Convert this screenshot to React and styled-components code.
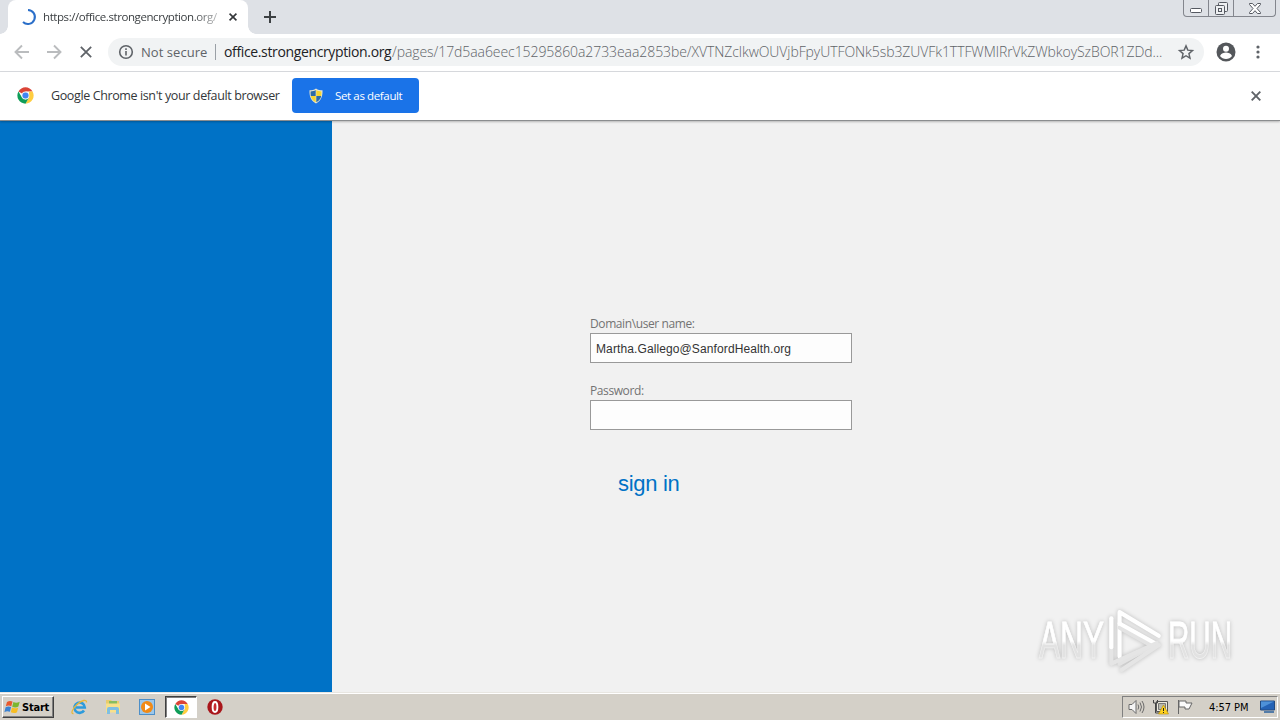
import React from "react";
import styled, { createGlobalStyle } from "styled-components";

const GlobalStyle = createGlobalStyle`
  * { box-sizing: border-box; }
  html, body { margin: 0; padding: 0; overflow: hidden; }
  button, input { font: inherit; border: 0; padding: 0; margin: 0; outline: 0; }
`;

const ui = `"Open Sans", "Noto Sans", sans-serif`;
const classic = `"DejaVu Sans Condensed", "DejaVu Sans", sans-serif`;

const Screen = styled.div`
  width: 1280px;
  height: 720px;
  display: flex;
  flex-direction: column;
  background: #f1f1f1;
  font-family: ${ui};
  overflow: hidden;
`;

const TabStrip = styled.header`
  height: 34px;
  flex: none;
  display: flex;
  background: #dee1e6;
  padding-left: 8px;
`;

const Tab = styled.div`
  position: relative;
  width: 240px;
  height: 34px;
  background: #fff;
  border-radius: 8px 8px 0 0;
  display: flex;
  align-items: center;
  padding: 0 8px 0 12px;
  &::before, &::after {
    content: "";
    position: absolute;
    bottom: 0;
    width: 8px;
    height: 8px;
  }
  &::before { left: -8px; background: radial-gradient(circle at 0 0, transparent 7.5px, #fff 8px); }
  &::after { right: -8px; background: radial-gradient(circle at 100% 0, transparent 7.5px, #fff 8px); }
`;

const TabTitle = styled.div`
  width: 177px;
  margin-left: 7px;
  font-size: 11.5px;
  line-height: 16px;
  letter-spacing: -0.42px;
  color: #3c4043;
  white-space: nowrap;
  mask-image: linear-gradient(90deg, #000 150px, rgba(0, 0, 0, 0.3) 176px);
`;

const Icon = styled.svg`
  display: block;
  flex: none;
  overflow: visible;
`;

const IconButton = styled.button`
  display: flex;
  align-items: center;
  justify-content: center;
  flex: none;
  width: ${(p) => p.$w || 16}px;
  height: ${(p) => p.$w || 16}px;
  margin-left: ${(p) => p.$gap || 0}px;
  background: transparent;
  color: ${(p) => p.$color || "#5f6368"};
`;

const NewTabButton = styled(IconButton)`
  margin-top: 3px;
`;

const WindowControls = styled.div`
  display: flex;
  height: 17px;
  margin: 0 4px 0 auto;
  border: 1px solid #83868d;
  border-top: 0;
  border-radius: 0 0 4px 4px;
`;

const WindowButton = styled.button`
  width: ${(p) => p.$w}px;
  display: flex;
  justify-content: center;
  align-items: center;
  padding-top: ${(p) => p.$drop || 0}px;
  background: transparent;
  & + & { border-left: 1px solid #83868d; }
`;

const Toolbar = styled.nav`
  height: 38px;
  flex: none;
  display: flex;
  align-items: center;
  background: #fff;
  border-bottom: 1px solid #dadce0;
  padding: 0 14px 1px;
`;

const AddressBar = styled.div`
  display: flex;
  align-items: center;
  width: 1096px;
  height: 28px;
  margin-left: 14px;
  padding: 0 10px;
  border-radius: 14px;
  background: #f1f3f4;
  font-size: 14px;
  font-weight: 300;
  line-height: 20px;
  color: #5f6368;
`;

const Security = styled.span`
  width: 67px;
  margin-left: 7px;
  white-space: nowrap;
  font-weight: 400;
  font-size: 13px;
  letter-spacing: 0.05px;
`;

const Divider = styled.span`
  width: 1px;
  height: 16px;
  margin: 0 8px 0 7px;
  background: #9aa0a6;
`;

const Url = styled.span`
  width: 940px;
  flex: none;
  white-space: nowrap;
  display: flex;
`;

const UrlPart = styled.span`
  width: ${(p) => p.$w}px;
  flex: none;
  color: ${(p) => p.$color};
  font-weight: ${(p) => p.$weight};
  letter-spacing: ${(p) => p.$spacing}px;
`;

const InfoBar = styled.section`
  height: 49px;
  flex: none;
  display: flex;
  align-items: center;
  background: #fff;
  border-bottom: 1px solid #8b8d8f;
  padding: 0 16px 1px 17px;
  position: relative;
  z-index: 1;
  box-shadow: 0 1px 2px rgba(0, 0, 0, 0.25);
`;

const InfoText = styled.span`
  width: 229px;
  margin: 0 12px 0 17px;
  font-size: 12.5px;
  line-height: 18px;
  letter-spacing: -0.38px;
  color: #333639;
  white-space: nowrap;
`;

const DefaultButton = styled.button`
  width: 127px;
  height: 35px;
  display: flex;
  align-items: center;
  padding-left: 16px;
  gap: 11px;
  border-radius: 4px;
  background: #1a73e8;
  color: #fff;
  font-size: 11.5px;
  letter-spacing: -0.37px;
  white-space: nowrap;
`;

const Page = styled.main`
  flex: 1;
  min-height: 0;
  display: flex;
  position: relative;
`;

const BluePanel = styled.aside`
  width: 332px;
  background: #0072c6;
`;

const LoginForm = styled.form`
  display: flex;
  flex-direction: column;
  width: 262px;
  margin: 195px 0 0 258px;
`;

const Label = styled.label`
  height: 17px;
  line-height: 16px;
  font-size: 12px;
  letter-spacing: -0.4px;
  color: #737373;
`;

const Field = styled.input`
  width: 262px;
  height: 30px;
  padding: 2px 5px 0;
  margin-bottom: 20px;
  border: 1px solid #999;
  background: #fdfdfd;
  color: #333;
  font-family: "Liberation Sans", Arial, sans-serif;
  font-size: 12px;
  letter-spacing: 0.11px;
`;

const SignIn = styled.button`
  align-self: flex-start;
  margin: 21px 0 0 28px;
  background: transparent;
  color: #0072c6;
  font-family: "Liberation Sans", Arial, sans-serif;
  font-size: 22px;
  letter-spacing: -0.3px;
  line-height: 26px;
  white-space: nowrap;
`;

const Watermark = styled.div`
  position: absolute;
  left: 1039px;
  top: 487px;
  width: 200px;
  height: 66px;
  display: flex;
  align-items: center;
  filter: drop-shadow(0 0 2px rgba(0, 0, 0, 0.22));
`;

const WordSlot = styled.span`
  width: 66px;
  flex: none;
  margin-left: ${(p) => p.$gap || 0}px;
`;

const WatermarkWord = styled.span`
  display: block;
  width: max-content;
  font-family: "Liberation Sans Narrow", "Liberation Sans", sans-serif;
  font-size: 51px;
  line-height: 54px;
  white-space: nowrap;
  transform: scaleX(${(p) => p.$scale});
  transform-origin: left;
  color: transparent;
  background: linear-gradient(#fff 50%, #e2e2e2 58%);
  background-clip: text;
  -webkit-text-stroke: 0.8px rgba(255, 255, 255, 0.5);
`;

const Taskbar = styled.footer`
  height: 28px;
  flex: none;
  display: flex;
  align-items: center;
  background: #d4d0c8;
  border-top: 1px solid #e8e6e1;
  box-shadow: inset 0 1px #fff;
  padding: 1px 2px 0;
  font-family: ${classic};
`;

const StartButton = styled.button`
  width: 52px;
  height: 22px;
  display: flex;
  align-items: center;
  gap: 1px;
  padding-left: 1px;
  background: #d4d0c8;
  border: 1px solid;
  border-color: #fff #404040 #404040 #fff;
  box-shadow: inset -1px -1px #808080;
  font-size: 11px;
  font-weight: 700;
  letter-spacing: -0.2px;
  color: #000;
`;

const QuickLaunch = styled.div`
  display: flex;
  align-items: center;
  margin-left: 8px;
`;

const TaskItem = styled.button`
  width: ${(p) => (p.$active ? 32 : 34)}px;
  height: 22px;
  display: flex;
  align-items: center;
  justify-content: center;
  margin: 0 ${(p) => (p.$active ? 1 : 0)}px;
  background: ${(p) => (p.$active ? "#fff" : "transparent")};
  border: ${(p) => (p.$active ? "1px solid" : "0")};
  border-color: #404040 #fff #fff #404040;
  box-shadow: ${(p) => (p.$active ? "inset 1px 1px #808080" : "none")};
`;

const Tray = styled.div`
  width: 156px;
  height: 22px;
  margin-left: auto;
  display: flex;
  align-items: center;
  padding: 0 1px 0 5px;
  border: 1px solid;
  border-color: #808080 #fff #fff #808080;
`;

const Clock = styled.time`
  width: 42px;
  margin: 0 11px 0 16px;
  font-size: 11px;
  letter-spacing: -0.05px;
  white-space: nowrap;
  color: #000;
`;

const TrayIcon = styled.span`
  margin-right: ${(p) => p.$gap || 0}px;
`;

const Chrome = ({ size = 16 }) => (
  <Icon width={size} height={size} viewBox="0 0 48 48">
    <circle cx="24" cy="24" r="23" fill="#fff" />
    <path d="M24 24 4.1 12.5A23 23 0 0 1 43.9 12.5H24Z" fill="#db4437" />
    <path d="M43.9 12.5A23 23 0 0 1 24 47l10-17.2V12.5Z" fill="#ffcd40" />
    <path d="M24 47A23 23 0 0 1 4.1 12.5L14 29.8 24 35l10-5.2Z" fill="#0f9d58" />
    <circle cx="24" cy="24" r="11" fill="#f1f1f1" />
    <circle cx="24" cy="24" r="8.6" fill="#4285f4" />
  </Icon>
);

const Cross = ({ size, width = 1.8 }) => (
  <Icon width={size} height={size} viewBox="0 0 10 10" stroke="currentColor" strokeWidth={width} fill="none">
    <path d="M.7.7 9.3 9.3M9.3.7.7 9.3" />
  </Icon>
);

const Arrow = ({ flip }) => (
  <Icon width="16" height="16" viewBox="0 0 16 16" fill="none" stroke="#babcbe" strokeWidth="1.9">
    <path d={flip ? "M1 8h13M8 1.5 14.5 8 8 14.5" : "M15 8H2M8 1.5 1.5 8 8 14.5"} />
  </Icon>
);

export default function App() {
  return (
    <Screen>
      <GlobalStyle />
      <TabStrip>
        <Tab>
          <Icon width="16" height="16" viewBox="0 0 16 16" fill="none" stroke="#2b6fc9" strokeWidth="2">
            <path d="M8 1A7 7 0 1 1 3 13" />
          </Icon>
          <TabTitle>https://office.strongencryption.org/</TabTitle>
          <IconButton $gap={8} $color="#34373a"><Cross size={8} width={2} /></IconButton>
        </Tab>
        <NewTabButton $w={28} $gap={8} $color="#3c4043">
          <Icon width="12" height="12" viewBox="0 0 12 12" stroke="currentColor" strokeWidth="2">
            <path d="M6 0v12M0 6h12" />
          </Icon>
        </NewTabButton>
        <WindowControls>
          <WindowButton $w={24} $drop={5}>
            <Icon width="12" height="5" viewBox="0 0 12 5" fill="#fff" stroke="#555961">
              <rect x=".5" y=".5" width="11" height="4" rx="1" />
            </Icon>
          </WindowButton>
          <WindowButton $w={25}>
            <Icon width="13" height="13" viewBox="0 0 13 13" fill="#eef0f2" stroke="#555961">
              <rect x="3.5" y=".5" width="9" height="9" rx="1" />
              <rect x=".5" y="3.5" width="9" height="9" rx="1" />
              <rect x="3.5" y="6.5" width="3" height="3" />
            </Icon>
          </WindowButton>
          <WindowButton $w={42}>
            <Icon width="12" height="11" viewBox="0 0 12 11" fill="#fff" stroke="#555961">
              <path d="M.5.5h3L6 3.3 8.5.5h3v1L8 5.5l3.5 4v1h-3L6 7.7 3.5 10.5h-3v-1L4 5.5.5 1.5Z" />
            </Icon>
          </WindowButton>
        </WindowControls>
      </TabStrip>

      <Toolbar>
        <IconButton><Arrow /></IconButton>
        <IconButton $gap={16}><Arrow flip /></IconButton>
        <IconButton $gap={16}><Cross size={12} width={1.5} /></IconButton>
        <AddressBar>
          <Icon width="16" height="16" viewBox="0 0 16 16" fill="none" stroke="#5f6368" strokeWidth="1.6">
            <circle cx="8" cy="8" r="6.3" />
            <path d="M8 7v4.5M8 4.3v1.7" />
          </Icon>
          <Security>Not secure</Security>
          <Divider />
          <Url>
            <UrlPart $w={168} $color="#202124" $weight={400} $spacing={-0.36}>office.strongencryption.org</UrlPart>
            <UrlPart $w={772} $color="#5f6368" $weight={300} $spacing={-0.075}>/pages/17d5aa6eec15295860a2733eaa2853be/XVTNZclkwOUVjbFpyUTFONk5sb3ZUVFk1TTFWMlRrVkZWbkoySzBOR1ZDd...</UrlPart>
          </Url>
          <IconButton $gap={14}>
            <Icon width="16" height="16" viewBox="0 0 24 24" fill="none" stroke="#5f6368" strokeWidth="2.2">
              <path d="m12 2.8 2.7 6.4 7 .6-5.3 4.6 1.6 6.8-6-3.6-6 3.6 1.6-6.8-5.3-4.6 7-.6Z" />
            </Icon>
          </IconButton>
        </AddressBar>
        <IconButton $w={20} $gap={12}>
          <Icon width="20" height="20" viewBox="0 0 20 20">
            <circle cx="10" cy="10" r="9.5" fill="#54575b" />
            <circle cx="10" cy="6.8" r="3" fill="#fff" />
            <path d="M4 14c1-2.6 4-3.4 6-3.4s5 .8 6 3.4c-1.4 2-3.6 3-6 3s-4.6-1-6-3Z" fill="#fff" />
          </Icon>
        </IconButton>
        <IconButton $gap={14}>
          <Icon width="4" height="14" viewBox="0 0 4 14" fill="#5f6368">
            <circle cx="2" cy="2" r="1.6" /><circle cx="2" cy="7" r="1.6" /><circle cx="2" cy="12" r="1.6" />
          </Icon>
        </IconButton>
      </Toolbar>

      <InfoBar>
        <Chrome size={17} />
        <InfoText>Google Chrome isn't your default browser</InfoText>
        <DefaultButton>
          <Icon width="16" height="16" viewBox="0 0 16 16">
            <path d="M8 .5C6 2 4 2.3 1.5 2.3 1.3 8 2.5 12.5 8 15.5 13.5 12.5 14.7 8 14.5 2.3 12 2.3 10 2 8 .5Z" fill="#e8e6d0" />
            <path d="M7.7 2v6H2.8c-.2-1.5-.3-3-.2-4.6C4.5 3.3 6.2 3 7.7 2ZM8.3 8h4.9c-.5 2.7-2 4.8-4.9 6.3Z" fill="#2c6ba8" />
            <path d="M8.3 2v6h4.9c.2-1.5.3-3 .2-4.6C11.5 3.3 9.8 3 8.3 2ZM7.7 8H2.8c.5 2.7 2 4.8 4.9 6.3Z" fill="#f5d532" />
          </Icon>
          Set as default
        </DefaultButton>
        <IconButton $gap={829}><Cross size={10} width={1.9} /></IconButton>
      </InfoBar>

      <Page>
        <BluePanel />
        <LoginForm onSubmit={(e) => e.preventDefault()}>
          <Label htmlFor="user">Domain\user name:</Label>
          <Field id="user" defaultValue="Martha.Gallego@SanfordHealth.org" />
          <Label htmlFor="pass">Password:</Label>
          <Field id="pass" type="password" />
          <SignIn>sign in</SignIn>
        </LoginForm>
        <Watermark>
          <WordSlot><WatermarkWord $scale={0.62}>ANY</WatermarkWord></WordSlot>
          <Icon width="58" height="66" viewBox="0 0 56 64" fill="none" strokeWidth="4" strokeLinejoin="round" strokeLinecap="round">
            <path d="M14 47V4l38 23" stroke="#fff" />
            <path d="M14 19l32 18-32 17" stroke="#e3e3e3" />
            <path d="M14 15 48 34" stroke="#fff" />
            <path d="M6 10v44L50 34" stroke="#e5e5e5" />
            <path d="M6 10v28" stroke="#fff" />
            <path d="M16 60 52 36" stroke="#e5e5e5" />
          </Icon>
          <WordSlot $gap={5}><WatermarkWord $scale={0.58}>RUN</WatermarkWord></WordSlot>
        </Watermark>
      </Page>

      <Taskbar>
        <StartButton>
          <Icon width="17" height="16" viewBox="0 0 17 16">
            <path d="M3 3c2-1.5 4-1.3 5.5-.5L7.3 7.2C5.5 6.3 3.7 6.3 1.8 7.3Z" fill="#e8582c" />
            <path d="M9.4 3c2 1 4 .9 6.3-.3l-1.3 4.8c-2 1.2-4 1.2-6.2.2Z" fill="#7bb62d" />
            <path d="M1.6 8.2c2-1.1 3.6-1 5.5-.2l-1.2 4.8c-2-.8-3.7-.7-5.5.4Z" fill="#3a82d2" />
            <path d="M8 8.5c2 1 4 1 6.2-.1L13 13.2c-2 1.2-4 1.1-6.2.1Z" fill="#f7bd22" />
          </Icon>
          Start
        </StartButton>
        <QuickLaunch>
          <TaskItem>
            <Icon width="17" height="16" viewBox="0 0 17 16" fill="none">
              <path d="M13 11.5A5.2 5.2 0 1 1 13.8 8.5H5" stroke="#2d9bdc" strokeWidth="2.6" />
              <path d="M2.5 14.5C-.5 15 1 10 6 5.5S16 0 15.5 3.5" stroke="#e9b83a" strokeWidth="1.3" />
            </Icon>
          </TaskItem>
          <TaskItem>
            <Icon width="16" height="16" viewBox="0 0 16 16">
              <path d="M1 1h5l1 1h7v10H1Z" fill="#e9cc6c" />
              <path d="M4 2h8v4H4Z" fill="#86bd60" />
              <path d="M1 4.5h14v9H1Z" fill="#f8e08a" />
              <path d="M2 15V10q0-2 2-2h8q2 0 2 2v5h-3v-4H5v4Z" fill="#7fbfe2" />
            </Icon>
          </TaskItem>
          <TaskItem>
            <Icon width="16" height="16" viewBox="0 0 16 16">
              <rect x=".5" y=".5" width="15" height="15" fill="#9cc7ea" stroke="#4d8fc8" />
              <circle cx="8" cy="8" r="6" fill="#f18a16" /><path d="M6 4.5v7L11.5 8Z" fill="#fff" />
            </Icon>
          </TaskItem>
          <TaskItem $active><Chrome size={15} /></TaskItem>
          <TaskItem>
            <Icon width="16" height="16" viewBox="0 0 16 16">
              <circle cx="8" cy="8" r="7.7" fill="#a9161b" />
              <ellipse cx="8" cy="8" rx="2.4" ry="5" fill="#c92a2e" stroke="#fff" strokeWidth="1.9" />
            </Icon>
          </TaskItem>
        </QuickLaunch>
        <Tray>
          <TrayIcon $gap={7}>
            <Icon width="17" height="16" viewBox="0 0 17 16" fill="none" stroke="#6b6b6b">
              <path d="M1 5.5h3l4-4v13l-4-4H1Z" fill="#f5f5f5" />
              <path d="M10 5.5q1.5 2.5 0 5M12 3.5q3 4.5 0 9M14 2q4 6 0 12" />
            </Icon>
          </TrayIcon>
          <TrayIcon $gap={8}>
            <Icon width="17" height="16" viewBox="0 0 17 16">
              <path d="M4.5 2.5h11v10h-11Z" fill="#ece9dd" stroke="#555" />
              <path d="M6.5 4.5h7v6h-7Z" fill="#b9b9ad" stroke="#777" />
              <path d="M1.5 1v3h4V1M3.5 4v10h4" fill="none" stroke="#444" />
              <path d="m11.5 6 5 9h-10Z" fill="#ffd21f" stroke="#b68b00" strokeWidth=".6" />
              <path d="M11.5 9v3M11.5 13v1" stroke="#222" />
            </Icon>
          </TrayIcon>
          <TrayIcon>
            <Icon width="16" height="16" viewBox="0 0 16 16" fill="#fafafa" stroke="#666">
              <path d="M1.5 1v14" /><path d="M2 2h7v2h6l-3 6H8V8H2Z" />
            </Icon>
          </TrayIcon>
          <Clock>4:57 PM</Clock>
          <Icon width="16" height="14" viewBox="0 0 16 14">
            <path d="M.5 1h14v9H.5Z" fill="#2462b5" stroke="#224a80" />
            <path d="M1 1.5h13L1 8Z" fill="#4e91d8" /><path d="M4 12h10" stroke="#537ca8" strokeWidth="2" />
          </Icon>
        </Tray>
      </Taskbar>
    </Screen>
  );
}
